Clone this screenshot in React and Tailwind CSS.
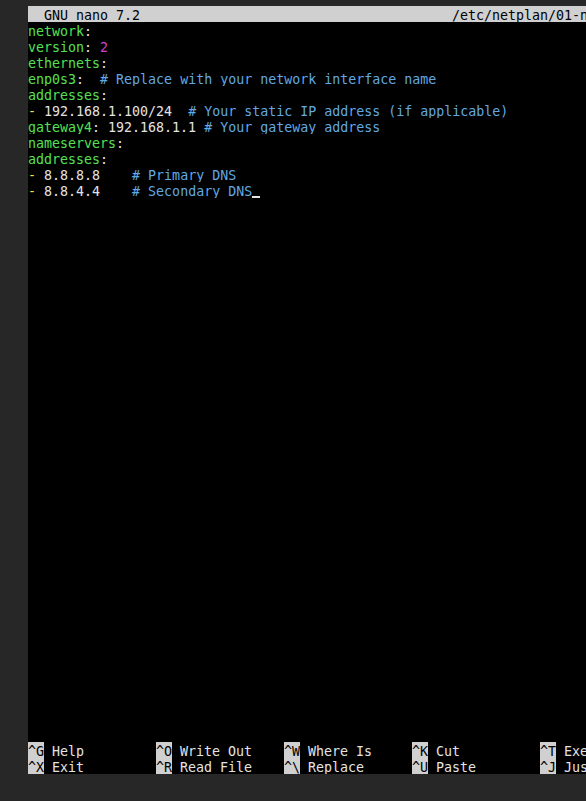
const G = 'text-[#55e055]';
const W = 'text-[#e4e4e4]';
const B = 'text-[#62a8e2]';
const M = 'text-[#cc44cc]';
const Y = 'text-[#e6e65a]';

const lines = [
  [['network', G], [':', W]],
  [['version', G], [': ', W], ['2', M]],
  [['ethernets', G], [':', W]],
  [['enp0s3', G], [':  ', W], ['# Replace with your network interface name', B]],
  [['addresses', G], [':', W]],
  [['-', Y], [' 192.168.1.100/24  ', W], ['# Your static IP address (if applicable)', B]],
  [['gateway4', G], [': 192.168.1.1 ', W], ['# Your gateway address', B]],
  [['nameservers', G], [':', W]],
  [['addresses', G], [':', W]],
  [['-', Y], [' 8.8.8.8    ', W], ['# Primary DNS', B]],
  [['-', Y], [' 8.8.4.4    ', W], ['# Secondary DNS', B]],
];

const shortcuts = [
  [['^G', 'Help'], ['^X', 'Exit']],
  [['^O', 'Write Out'], ['^R', 'Read File']],
  [['^W', 'Where Is'], ['^\\', 'Replace']],
  [['^K', 'Cut'], ['^U', 'Paste']],
  [['^T', 'Execute'], ['^J', 'Justify']],
];

function Key({ k, label }) {
  return (
    <div className="flex w-[128px] shrink-0 h-4">
      <span className="inline-block h-4 w-4 bg-[#d0d0d0] text-black">{k}</span>
      <span className="text-[#e4e4e4]"> {label}</span>
    </div>
  );
}

export default function App() {
  return (
    <div
      className="w-[586px] h-[801px] bg-[#272727] pt-[6px] pl-[28px] overflow-hidden"
      style={{ fontFamily: '"DejaVu Sans Mono", "Liberation Mono", monospace' }}
    >
      <div className="w-[558px] h-[768px] bg-black flex flex-col text-[13.3px] leading-[20px] whitespace-pre overflow-hidden">
        <div className="h-4 bg-[#d0d0d0] text-black flex overflow-hidden">
          <span className="w-[424px] shrink-0">  GNU nano 7.2</span>
          <span>/etc/netplan/01-network-manager-all.yaml</span>
        </div>
        {lines.map((parts, i) => (
          <div key={i} className="h-4 overflow-hidden">
            {parts.map(([t, c], j) => (
              <span key={j} className={c}>{t}</span>
            ))}
            {i === lines.length - 1 && (
              <span className="inline-block w-2 h-4 align-top border-b-2 border-[#e4e4e4] box-border" />
            )}
          </div>
        ))}
        <div className="flex-1" />
        {[0, 1].map((r) => (
          <div key={r} className="h-4 flex overflow-hidden">
            {shortcuts.map((col, c) => (
              <Key key={c} k={col[r][0]} label={col[r][1]} />
            ))}
          </div>
        ))}
      </div>
    </div>
  );
}
